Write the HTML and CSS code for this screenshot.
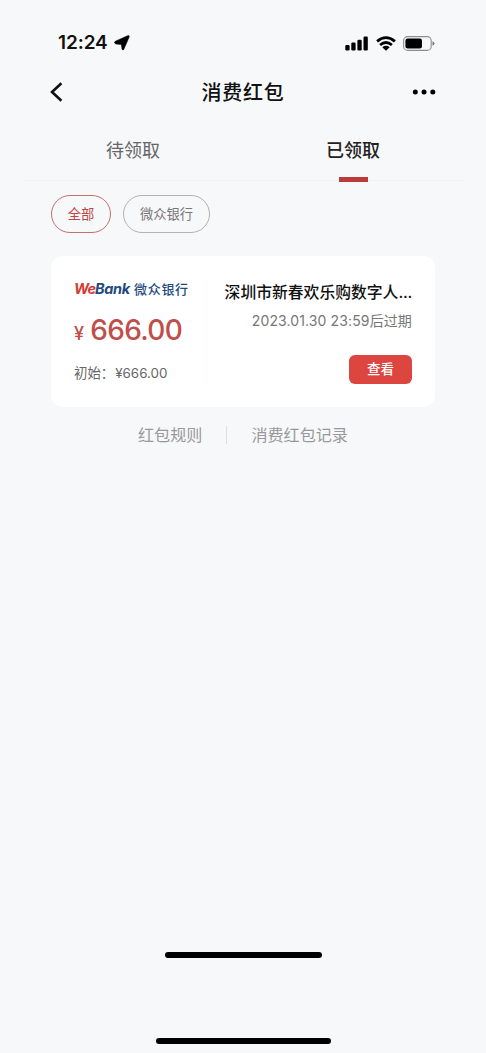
FILE: index.html
```html
<!DOCTYPE html>
<html lang="zh-CN">
<head>
<meta charset="utf-8">
<title>消费红包</title>
<link rel="stylesheet" href="styles.css">
</head>
<body>
<header class="status">
  <div class="status-left">
    <span class="time">12:24</span>
    <svg class="location" width="16" height="16" viewBox="0 0 16 16"><path d="M13.5 .8Q15.9-.1 15.1 2.2L9.9 14.2Q8.8 16 8 14.2L7.3 9.6 1.8 9Q-.7 7.7 1.3 6.2Z" stroke="#000" stroke-width=".5"/></svg>
  </div>
  <div class="status-right">
    <svg width="24" height="15" viewBox="0 0 24 15"><rect x=".3" y="9" width="4.3" height="5.5" rx="1.2"/><rect x="6.3" y="6.5" width="4.3" height="8" rx="1.2"/><rect x="12.4" y="3.7" width="4.3" height="10.8" rx="1.2"/><rect x="18.5" y=".5" width="4.3" height="14" rx="1.2"/></svg>
    <svg class="wifi" width="20" height="15" viewBox="0 0 20 15"><g fill="none" stroke="#000" stroke-width="2.8"><path d="M1.1 5.4Q10-2.2 18.9 5.4"/><path d="M4.1 9Q10 4.1 15.9 9"/></g><path d="M6.3 11.2Q10 8.5 13.7 11.2L10 14.8Z"/></svg>
    <svg class="battery" width="32" height="15" viewBox="0 0 32 15"><rect x=".6" y=".6" width="27.6" height="13.8" rx="4" fill="none" stroke="#8c8d8f" stroke-width="1.1"/><rect x="2.4" y="2.4" width="16.6" height="10.2" rx="2.3"/><path d="M29.5 5.2Q31.5 6 31.5 7.5T29.5 9.8Z" fill="#77787a"/></svg>
  </div>
</header>
<nav class="nav">
  <svg width="13" height="20" viewBox="0 0 13 20"><path d="M11.4 1.2 2 10l9.4 8.8" fill="none" stroke="#111" stroke-width="2.6"/></svg>
  <h1 class="nav-title">消费红包</h1>
  <svg width="24" height="6" viewBox="0 0 24 6"><circle cx="3.3" cy="3" r="2.5"/><circle cx="12" cy="3" r="2.5"/><circle cx="20.8" cy="3" r="2.5"/></svg>
</nav>
<div class="tabs">
  <div class="tab">待领取</div>
  <div class="tab active">已领取</div>
</div>
<div class="chips">
  <span class="chip selected">全部</span>
  <span class="chip">微众银行</span>
</div>
<main class="card">
  <section class="amount-side">
    <div class="logo"><span class="latin"><span class="we">We</span>Bank</span><span class="bank-name">微众银行</span></div>
    <div class="amount"><span class="yen">¥</span><span>666.00</span></div>
    <div class="initial">初始：<span class="initial-value">¥666.00</span></div>
  </section>
  <section class="info-side">
    <h2 class="card-title">深圳市新春欢乐购数字人<span class="dots">...</span></h2>
    <div class="expiry">2023.01.30 23:59后过期</div>
    <button class="view">查看</button>
  </section>
</main>
<div class="links">
  <span>红包规则</span>
  <i class="separator"></i>
  <span>消费红包记录</span>
</div>
<footer class="home">
  <div class="bar inner"></div>
  <div class="bar outer"></div>
</footer>
</body>
</html>
```
FILE: styles.css
```css
* { box-sizing: border-box; }
body {
  margin: 0;
  height: 1053px;
  display: flex;
  flex-direction: column;
  background: #f7f8fa;
  color: #111;
  font-family: Inter, "Noto Sans CJK SC", sans-serif;
  white-space: nowrap;
  overflow: hidden;
}
svg { display: block; flex: none; }
.status {
  height: 63px;
  padding: 23px 51px 0 58px;
  display: flex;
  justify-content: space-between;
  align-items: center;
}
.status-left, .status-right { display: flex; align-items: center; }
.time { font-size: 19px; font-weight: 600; line-height: 24px; letter-spacing: -.1px; }
.location { margin-left: 6px; }
.wifi { margin-left: 7px; }
.battery { margin-left: 7px; }
.nav {
  height: 58px;
  padding: 0 50px;
  display: flex;
  justify-content: space-between;
  align-items: center;
}
.nav-title { margin: 2px 0 0 11px; font-size: 20px; line-height: 30px; font-weight: 500; letter-spacing: .8px; }
.tabs {
  height: 61px;
  margin: 0 23px;
  display: flex;
  background: linear-gradient(#f1f2f4, #f1f2f4) 0 59px / 100% 1px no-repeat;
}
.tab {
  flex: 1;
  display: flex;
  flex-direction: column;
  align-items: center;
  padding-top: 16px;
  font-size: 18px;
  line-height: 28px;
  color: #666;
}
.tab.active { color: #222; font-weight: 500; }
.tab.active::after { content: ""; width: 29px; height: 5px; margin-top: 12px; background: #bd3a3a; }
.chips { display: flex; gap: 12px; margin: 13px 51px 0; }
.chip {
  height: 38px;
  padding: 0 16px;
  border: 1px solid #b1b2b4;
  border-radius: 19px;
  font-size: 13.3px;
  line-height: 36px;
  color: #777;
}
.chip.selected { padding: 0 15.7px; border-color: #c4706b; color: #c0453f; }
.card {
  height: 151px;
  margin: 23px 51px 0;
  padding: 24px 23px 23px;
  display: flex;
  background: #fff;
  border-radius: 12px;
}
.amount-side { width: 133px; border-right: 1px solid #fafafa; }
.logo { display: flex; align-items: center; height: 18px; color: #234a7d; }
.latin { width: 57px; font: italic 700 14.5px/18px Inter, sans-serif; letter-spacing: -.35px; }
.we { color: #d63a35; letter-spacing: -.9px; }
.bank-name { margin-left: 3px; font-size: 13px; line-height: 16px; font-weight: 500; letter-spacing: .7px; }
.amount { display: flex; align-items: baseline; margin-top: 14px; color: #c04e4a; font-size: 28px; line-height: 36px; font-weight: 500; letter-spacing: -.7px; }
.yen { margin-right: 7px; font-size: 18px; }
.initial { margin-top: 11px; font-size: 13.4px; line-height: 20px; color: #666; }
.initial-value { margin-left: 1px; }
.info-side { flex: 1; display: flex; flex-direction: column; align-items: flex-end; }
.card-title { margin: 1px 0 0; font-size: 15.8px; line-height: 23px; font-weight: 500; }
.dots { letter-spacing: -.25px; }
.expiry { margin-top: 6px; font-size: 14px; line-height: 21px; letter-spacing: .12px; color: #777; }
.view {
  width: 63px;
  height: 29px;
  margin-top: 24px;
  padding: 0;
  border: 0;
  border-radius: 6px;
  background: #dc4540;
  color: #fff;
  font: 500 13.5px/29px Inter, "Noto Sans CJK SC", sans-serif;
}
.links {
  display: flex;
  align-items: center;
  height: 24px;
  margin: 16px 0 0 138px;
  font-size: 16.1px;
  line-height: 24px;
  color: #999;
}
.separator { width: 1px; height: 18px; margin: 0 24px; background: #dedfe1; }
.home { margin-top: auto; padding-bottom: 9px; display: flex; flex-direction: column; align-items: center; gap: 80px; }
.bar { height: 6px; border-radius: 3px; background: #000; }
.inner { width: 157px; }
.outer { width: 175px; }
```
